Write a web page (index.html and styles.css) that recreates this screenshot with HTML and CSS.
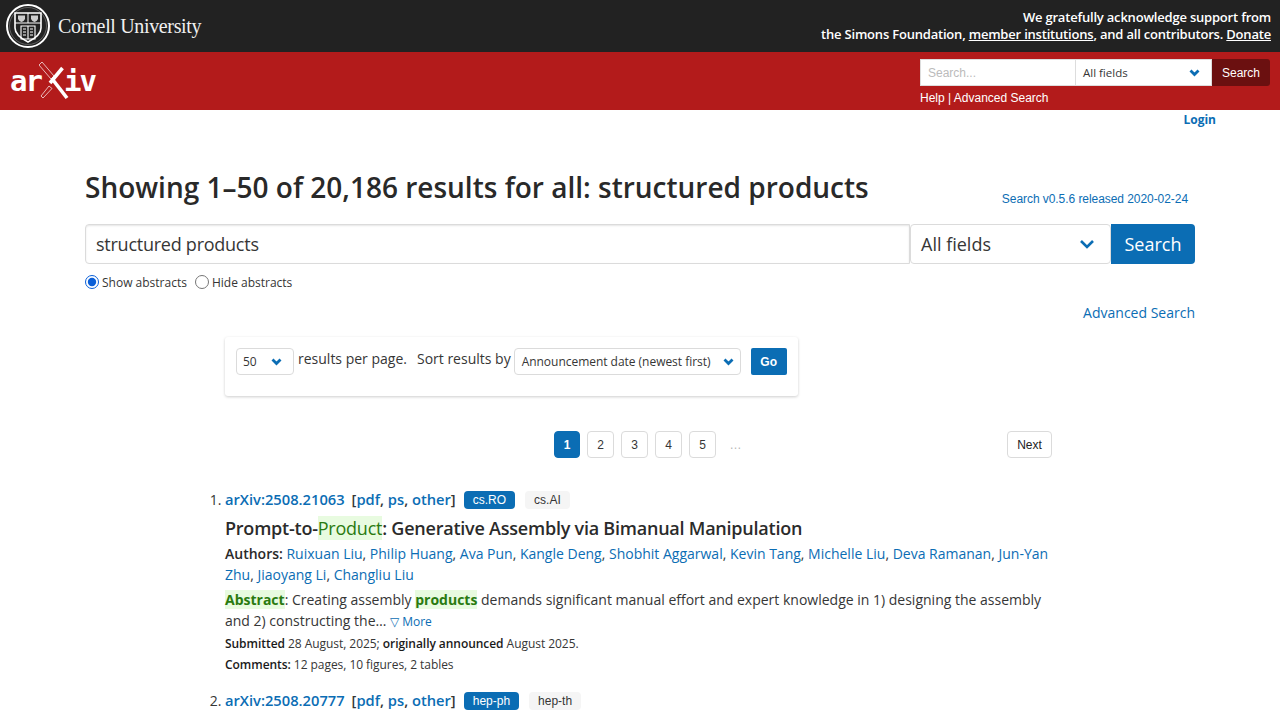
FILE: index.html
```html
<!DOCTYPE html>
<html lang="en">
<head>
    <meta charset="UTF-8">
    <title>Search | arXiv e-print repository</title>
    <link rel="stylesheet" href="styles.css">
</head>
<body>
    <div class="support-bar">
        <a class="cornell" href="#">
            <svg class="seal" width="46" height="46" viewBox="0 0 46 46">
                <circle cx="23" cy="23" r="21" fill="none" stroke="#fff" stroke-width="2"/>
                <circle cx="23" cy="23" r="18.500" fill="none" stroke="#888" stroke-width="0.6"/>
                <path d="M10 10h26v15c0 7-7 11-13 14c-6-3-13-7-13-14z" fill="none" stroke="#fff" stroke-width="1.600"/>
                <path d="M10 20h26M23 10v10" stroke="#fff" stroke-width="1"/>
                <path d="M13 12.500h7v3c0 1.500-2 3-3.500 3.500c-1.500-.5-3.500-2-3.500-3.500z" fill="#ccc"/>
                <path d="M26 12.500h7v3c0 1.500-2 3-3.500 3.500c-1.500-.5-3.500-2-3.500-3.500z" fill="#ccc"/>
                <path d="M16 23h14v13h-14zM23 23v13" fill="none" stroke="#fff" stroke-width="1.100"/>
                <path d="M18 26h3M18 29h3M18 32h3M25 26h3M25 29h3M25 32h3" stroke="#fff" stroke-width="1"/>
            </svg>
            <span class="cornell-name">Cornell University</span>
        </a>
        <div class="support-text">
            We gratefully acknowledge support from<br>
            the Simons Foundation, <a href="#">member institutions</a>, and all contributors. <a href="#">Donate</a>
        </div>
    </div>

    <header class="red-bar">
        <a class="arxiv-logo" href="#">
            <span>ar</span>
            <svg class="logo-x" width="30" height="38" viewBox="0 0 30 38">
                <path d="M0 3L3 0L15 14L12 17z" fill="none" stroke="#fff" stroke-width="0.7"/>
                <path d="M10 24L13 26.500L4 36L2 34z" fill="none" stroke="#fff" stroke-width="0.7"/>
                <path d="M23.500 6L11 21" stroke="#fff" stroke-width="3.600" fill="none"/>
                <path d="M14 18L28 36" stroke="#fff" stroke-width="3.600" fill="none"/>
            </svg>
            <span>iv</span>
        </a>
        <div class="top-search">
            <form class="top-search-row">
                <input class="top-input" type="text" placeholder="Search...">
                <div class="top-select">All fields
                    <svg class="chev" width="11" height="8" viewBox="0 0 11 8"><path d="M1.500 1.500l4 4 4-4" fill="none" stroke="#0b6db4" stroke-width="2.800"/></svg>
                </div>
                <button class="top-btn" type="button">Search</button>
            </form>
            <div class="top-links"><a href="#">Help</a> | <a href="#">Advanced Search</a></div>
        </div>
    </header>

    <div class="login-row"><a href="#">Login</a></div>

    <main class="content">
        <div class="title-row">
            <h1>Showing 1–50 of 20,186 results for all: structured products</h1>
            <span class="version">Search v0.5.6 released 2020-02-24</span>
        </div>

        <div class="search-row">
            <input class="main-input" type="text" value="structured products">
            <div class="main-select">All fields
                <svg class="chev" width="16" height="11" viewBox="0 0 16 11"><path d="M2 2l6 6 6-6" fill="none" stroke="#0b6db4" stroke-width="2.600"/></svg>
            </div>
            <button class="main-btn" type="button">Search</button>
        </div>

        <div class="radio-row">
            <label><input type="radio" name="abs" checked>Show abstracts</label>
            <label><input type="radio" name="abs">Hide abstracts</label>
        </div>

        <div class="adv-row"><a href="#">Advanced Search</a></div>

        <div class="options-box">
            <div class="small-select size-select">50
                <svg class="chev" width="11" height="8" viewBox="0 0 11 8"><path d="M1.500 1.500l4 4 4-4" fill="none" stroke="#0b6db4" stroke-width="2.800"/></svg>
            </div>
            <span class="opt-text">results per page.</span>
            <span class="opt-text sort-label">Sort results by</span>
            <div class="small-select sort-select">Announcement date (newest first)
                <svg class="chev" width="11" height="8" viewBox="0 0 11 8"><path d="M1.500 1.500l4 4 4-4" fill="none" stroke="#0b6db4" stroke-width="2.800"/></svg>
            </div>
            <button class="go-btn" type="button">Go</button>
        </div>

        <nav class="pager">
            <a class="page current" href="#">1</a>
            <a class="page" href="#">2</a>
            <a class="page" href="#">3</a>
            <a class="page" href="#">4</a>
            <a class="page" href="#">5</a>
            <span class="dots">…</span>
            <a class="page next" href="#">Next</a>
        </nav>

        <ol class="results">
            <li class="result">
                <div class="result-head">
                    <a class="arxiv-id" href="#">arXiv:2508.21063</a>
                    <span class="formats">[<a href="#">pdf</a>, <a href="#">ps</a>, <a href="#">other</a>]</span>
                    <span class="tag primary">cs.RO</span>
                    <span class="tag">cs.AI</span>
                </div>
                <p class="paper-title">Prompt-to-<span class="hl">Product</span>: Generative Assembly via Bimanual Manipulation</p>
                <p class="authors"><b>Authors:</b> <a href="#">Ruixuan Liu</a>, <a href="#">Philip Huang</a>, <a href="#">Ava Pun</a>, <a href="#">Kangle Deng</a>, <a href="#">Shobhit Aggarwal</a>, <a href="#">Kevin Tang</a>, <a href="#">Michelle Liu</a>, <a href="#">Deva Ramanan</a>, <a href="#">Jun-Yan Zhu</a>, <a href="#">Jiaoyang Li</a>, <a href="#">Changliu Liu</a></p>
                <p class="abstract"><b class="hl">Abstract</b>: Creating assembly <b class="hl">products</b> demands significant manual effort and expert knowledge in 1) designing the assembly and 2) constructing the… <a class="more" href="#">▽ More</a></p>
                <p class="meta"><b>Submitted</b> 28 August, 2025; <b>originally announced</b> August 2025.</p>
                <p class="meta"><b>Comments:</b> 12 pages, 10 figures, 2 tables</p>
            </li>
            <li class="result">
                <div class="result-head">
                    <a class="arxiv-id" href="#">arXiv:2508.20777</a>
                    <span class="formats">[<a href="#">pdf</a>, <a href="#">ps</a>, <a href="#">other</a>]</span>
                    <span class="tag primary">hep-ph</span>
                    <span class="tag">hep-th</span>
                </div>
            </li>
        </ol>
    </main>
</body>
</html>
```

FILE: styles.css
```css
html, body {
    margin: 0;
    height: 720px;
    overflow: hidden;
}
body {
    font-family: "Open Sans", sans-serif;
    color: #292929;
    background: #fff;
}
a {
    color: #0b6db4;
    text-decoration: none;
}
p {
    margin: 0;
}

/* top black strip */
.support-bar {
    height: 52px;
    background: #222;
    display: flex;
    justify-content: space-between;
    align-items: center;
    padding: 0 9px 0 5px;
}
.cornell {
    display: flex;
    align-items: center;
    gap: 7px;
}
.cornell-name {
    font-family: "Liberation Serif", serif;
    font-size: 20px;
    letter-spacing: -0.35px;
    color: #f0f0f0;
}
.support-text {
    font-size: 13px;
    font-weight: 600;
    letter-spacing: -0.2px;
    line-height: 17px;
    text-align: right;
    color: #fff;
}
.support-text a {
    color: #fff;
    text-decoration: underline;
}

/* red bar */
.red-bar {
    height: 58px;
    background: #b31b1b;
    display: flex;
    justify-content: space-between;
    padding: 0 10px;
}
.arxiv-logo {
    display: flex;
    align-items: center;
    font-family: "DejaVu Sans Mono", monospace;
    font-size: 29px;
    font-weight: 700;
    letter-spacing: -2px;
    color: #fff;
}
.logo-x {
    margin: 0 -5px 0 -2px;
}
.top-search {
    width: 350px;
    padding-top: 7px;
}
.top-search-row {
    display: flex;
    height: 27px;
    margin: 0;
}
.top-input {
    width: 156px;
    box-sizing: border-box;
    border: 1px solid #ddd;
    padding: 0 7px;
    font: 12px "Liberation Sans", sans-serif;
    outline: none;
}
.top-input::placeholder {
    color: #bbb;
}
.top-select {
    width: 136px;
    box-sizing: border-box;
    background: #fff;
    border: 1px solid #ddd;
    border-left: 0;
    display: flex;
    justify-content: space-between;
    align-items: center;
    padding: 0 11px 0 7px;
    font-size: 11.500px;
    color: #363636;
}
.top-btn {
    flex: 1;
    border: 0;
    border-radius: 0 3px 3px 0;
    background: #6b1010;
    color: #fff;
    font: 12px "Liberation Sans", sans-serif;
}
.top-links {
    margin-top: 4px;
    font: 12px/16px "Liberation Sans", sans-serif;
    color: #fff;
}
.top-links a {
    color: #fff;
}

.login-row {
    height: 20px;
    padding-right: 64px;
    text-align: right;
    font-size: 12px;
    font-weight: 700;
    line-height: 19px;
}

/* main column */
.content {
    width: 1110px;
    margin: 0 auto;
}
.title-row {
    display: flex;
    align-items: flex-end;
    justify-content: space-between;
    padding-top: 37px;
    padding-right: 7px;
}
h1 {
    margin: 0;
    font-size: 28px;
    line-height: 40px;
    font-weight: 600;
    color: #292929;
}
.version {
    font: 12px/16px "Liberation Sans", sans-serif;
    letter-spacing: -0.06px;
    color: #0b6db4;
}
.search-row {
    display: flex;
    height: 40px;
    margin-top: 17px;
}
.main-input {
    flex: 1;
    min-width: 0;
    box-sizing: border-box;
    border: 1px solid #dbdbdb;
    border-radius: 4px 0 0 4px;
    padding: 0 10px;
    font: 18px "Open Sans", sans-serif;
    letter-spacing: -0.25px;
    color: #363636;
    outline: none;
    box-shadow: inset 0 1px 2px rgba(10, 10, 10, 0.1);
}
.main-select {
    width: 201px;
    box-sizing: border-box;
    border: 1px solid #dbdbdb;
    border-radius: 4px;
    display: flex;
    justify-content: space-between;
    align-items: center;
    padding: 0 15px 0 10px;
    font-size: 18px;
    color: #363636;
}
.main-btn {
    width: 84px;
    border: 0;
    border-radius: 0 4px 4px 0;
    background: #0b6db4;
    color: #fff;
    font: 18px "Open Sans", sans-serif;
}
.radio-row {
    display: flex;
    gap: 8px;
    margin-top: 10px;
    font-size: 12px;
    line-height: 18px;
    color: #363636;
}
.radio-row label {
    display: flex;
    align-items: center;
}
.radio-row input {
    margin: -3px 3px 0 0;
    width: 14px;
    height: 14px;
    accent-color: #0a5fd8;
}
.adv-row {
    margin-top: 11px;
    text-align: right;
    font-size: 14px;
    line-height: 20px;
}

/* sort options */
.options-box {
    width: 573px;
    height: 59px;
    box-sizing: border-box;
    margin: 14px 0 0 140px;
    padding: 11px;
    display: flex;
    align-items: flex-start;
    border-radius: 3px;
    box-shadow: 0 1px 3px rgba(10, 10, 10, 0.2);
}
.small-select {
    box-sizing: border-box;
    height: 27px;
    border: 1px solid #dbdbdb;
    border-radius: 4px;
    display: flex;
    justify-content: space-between;
    align-items: center;
    font-size: 12px;
    color: #363636;
    padding: 0 6px;
}
.size-select {
    width: 58px;
    padding-right: 11px;
}
.sort-select {
    width: 227px;
    padding-left: 7px;
    margin-left: 3px;
    letter-spacing: -0.03px;
}
.opt-text {
    font-size: 14px;
    line-height: 20px;
    color: #363636;
    margin: 1px 0 0 4px;
}
.sort-label {
    margin-left: 10px;
}
.go-btn {
    width: 36px;
    height: 27px;
    margin-left: 10px;
    border: 0;
    border-radius: 2px;
    background: #0b6db4;
    color: #fff;
    font: bold 12px "Liberation Sans", sans-serif;
}

/* pagination */
.pager {
    display: flex;
    align-items: center;
    gap: 7px;
    width: 498px;
    margin: 35px 0 0 469px;
    font: 12px "Liberation Sans", sans-serif;
}
.page {
    box-sizing: border-box;
    width: 27px;
    height: 27px;
    border: 1px solid #dbdbdb;
    border-radius: 4px;
    display: flex;
    align-items: center;
    justify-content: center;
    color: #363636;
}
.page.current {
    width: 26px;
    background: #0b6db4;
    border-color: #0b6db4;
    color: #fff;
    font-weight: 700;
}
.page.next {
    width: 45px;
    margin-left: auto;
    color: #222;
}
.dots {
    width: 25px;
    text-align: center;
    color: #b5b5b5;
}

/* results */
.results {
    margin: 31px 0 0;
    padding: 0 0 0 140px;
    width: 827px;
    list-style: decimal;
    font-size: 14px;
    color: #363636;
}
.result {
    margin-bottom: 16px;
}
.result-head {
    display: flex;
    align-items: center;
    height: 20px;
    font-size: 14.700px;
    font-weight: 600;
}
.formats {
    margin-left: 7px;
}
.tag {
    margin: 1px 0 0 10px;
    padding: 0 9px;
    height: 18px;
    border-radius: 4px;
    background: #f5f5f5;
    font: 12px/18px "Liberation Sans", sans-serif;
    color: #363636;
}
.tag.primary {
    margin-left: 8px;
    background: #0b6db4;
    color: #fff;
}
.paper-title {
    margin-top: 7px;
    font-size: 18px;
    letter-spacing: -0.23px;
    line-height: 25px;
    font-weight: 600;
    color: #2b2b2b;
}
.hl {
    background: #e8fbe0;
    color: #2a7a10;
}
.paper-title .hl {
    font-weight: 400;
}
.authors {
    margin-top: 2px;
    line-height: 21px;
    color: #363636;
}
.authors b {
    font-weight: 600;
    color: #292929;
}
.abstract {
    margin-top: 4px;
    line-height: 21px;
}
.more {
    font-size: 12px;
}
.meta {
    margin-top: 3px;
    font-size: 12px;
    letter-spacing: -0.05px;
    line-height: 18px;
}
.meta b {
    font-weight: 600;
    color: #1a1a1a;
}
```
